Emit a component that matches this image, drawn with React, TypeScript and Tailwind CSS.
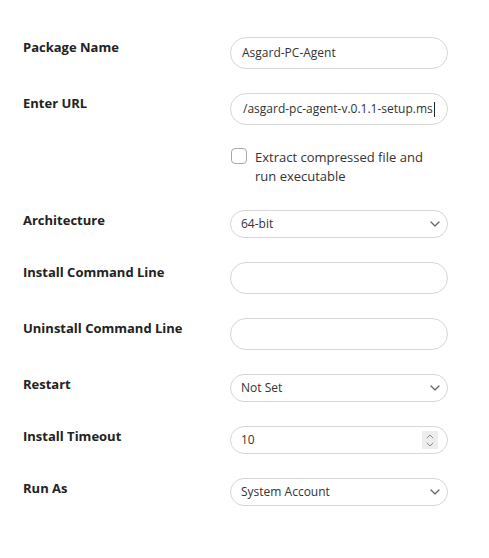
import { ReactNode } from "react";

const Chevron = () => (
  <svg width="10" height="6" viewBox="0 0 10 6" className="text-[#666]">
    <path d="M1 1l4 4 4-4" fill="none" stroke="currentColor" strokeWidth="1.3" strokeLinecap="round" strokeLinejoin="round" />
  </svg>
);

const Spinner = () => (
  <div className="flex h-[18px] w-[16px] flex-col items-center justify-center gap-[3px] bg-[#ededed]">
    <svg width="8" height="5" viewBox="0 0 8 5">
      <path d="M1 4l3-3 3 3" fill="none" stroke="#8a8a8a" strokeWidth="1" strokeLinecap="round" />
    </svg>
    <svg width="8" height="5" viewBox="0 0 8 5">
      <path d="M1 1l3 3 3-3" fill="none" stroke="#8a8a8a" strokeWidth="1" strokeLinecap="round" />
    </svg>
  </div>
);

interface RowProps {
  label: string;
  children: ReactNode;
}

const Row = ({ label, children }: RowProps) => (
  <div className="flex">
    <div className="w-[207px] text-[13px] font-bold leading-5 text-[#222]">{label}</div>
    <div className="w-[218px]">{children}</div>
  </div>
);

const TextBox = ({ value = "" }: { value?: string }) => (
  <div className="flex h-8 items-center rounded-full border border-[#d6d6d6] px-[11px] text-[12px] text-[#333]">
    {value}
  </div>
);

const SelectBox = ({ value }: { value: string }) => (
  <div className="flex h-7 items-center justify-between rounded-full border border-[#d6d6d6] pl-[10px] pr-[7px] text-[12px] text-[#333]">
    <span>{value}</span>
    <Chevron />
  </div>
);

export default function App() {
  return (
    <div className="min-h-[558px] w-full bg-white pl-[23px] pt-[37px] font-['Open_Sans',sans-serif]">
      <div className="flex flex-col gap-6">
        <Row label="Package Name">
          <TextBox value="Asgard-PC-Agent" />
        </Row>
        <Row label="Enter URL">
          <div className="flex h-8 items-center overflow-hidden whitespace-nowrap rounded-full border border-[#d6d6d6] pl-[12px] text-[12px] text-[#333]">
            <span>/asgard-pc-agent-v.0.1.1-setup.ms</span>
            <span className="ml-[1px] h-[15px] w-[1px] bg-[#222]" />
          </div>
          <div className="mt-[23px] flex gap-2">
            <div className="ml-[1px] h-4 w-4 shrink-0 rounded-[4px] border border-[#a8a8a8] bg-white" />
            <div className="text-[13px] leading-[19px] text-[#333]">
              Extract compressed file and
              <br />
              run executable
            </div>
          </div>
        </Row>
        <Row label="Architecture">
          <SelectBox value="64-bit" />
        </Row>
        <Row label="Install Command Line">
          <TextBox />
        </Row>
        <Row label="Uninstall Command Line">
          <TextBox />
        </Row>
        <Row label="Restart">
          <SelectBox value="Not Set" />
        </Row>
        <Row label="Install Timeout">
          <div className="flex h-7 items-center justify-between rounded-full border border-[#d6d6d6] pl-[10px] pr-[9px] text-[12px] text-[#333]">
            <span>10</span>
            <Spinner />
          </div>
        </Row>
        <Row label="Run As">
          <SelectBox value="System Account" />
        </Row>
      </div>
    </div>
  );
}
